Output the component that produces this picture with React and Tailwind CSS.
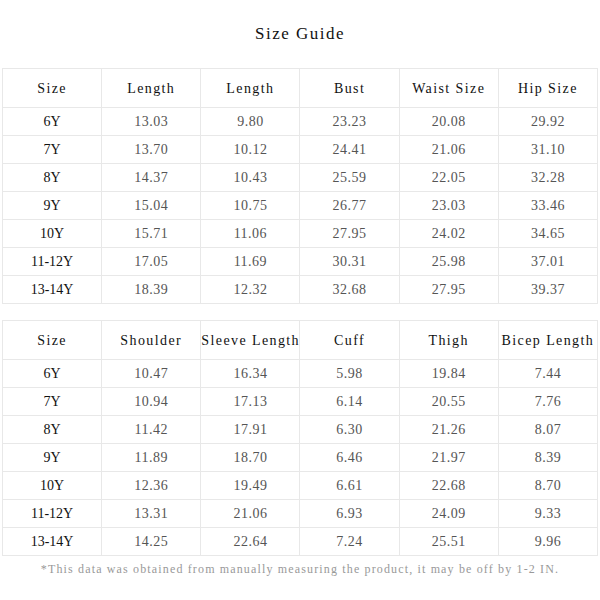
const top = {
  head: ["Size", "Length", "Length", "Bust", "Waist Size", "Hip Size"],
  rows: [
    ["6Y", "13.03", "9.80", "23.23", "20.08", "29.92"],
    ["7Y", "13.70", "10.12", "24.41", "21.06", "31.10"],
    ["8Y", "14.37", "10.43", "25.59", "22.05", "32.28"],
    ["9Y", "15.04", "10.75", "26.77", "23.03", "33.46"],
    ["10Y", "15.71", "11.06", "27.95", "24.02", "34.65"],
    ["11-12Y", "17.05", "11.69", "30.31", "25.98", "37.01"],
    ["13-14Y", "18.39", "12.32", "32.68", "27.95", "39.37"],
  ],
}

const bottom = {
  head: ["Size", "Shoulder", "Sleeve Length", "Cuff", "Thigh", "Bicep Length"],
  rows: [
    ["6Y", "10.47", "16.34", "5.98", "19.84", "7.44"],
    ["7Y", "10.94", "17.13", "6.14", "20.55", "7.76"],
    ["8Y", "11.42", "17.91", "6.30", "21.26", "8.07"],
    ["9Y", "11.89", "18.70", "6.46", "21.97", "8.39"],
    ["10Y", "12.36", "19.49", "6.61", "22.68", "8.70"],
    ["11-12Y", "13.31", "21.06", "6.93", "24.09", "9.33"],
    ["13-14Y", "14.25", "22.64", "7.24", "25.51", "9.96"],
  ],
}

function SizeTable({ data }) {
  return (
    <table className="w-[596px] mx-[2px] table-fixed border-collapse border border-[#e8e8e8]">
      <thead>
        <tr className="h-[39px]">
          {data.head.map((h, i) => (
            <th
              key={i}
              className="border border-[#e8e8e8] text-center font-normal text-[14px] tracking-[1.4px] text-[#111] whitespace-nowrap px-0"
            >
              {h}
            </th>
          ))}
        </tr>
      </thead>
      <tbody>
        {data.rows.map((row, r) => (
          <tr key={r} className="h-[28px]">
            {row.map((cell, c) => (
              <td
                key={c}
                className={
                  c === 0
                    ? "border border-[#e8e8e8] text-center text-[14px] text-[#111]"
                    : "border border-[#e8e8e8] text-center text-[14px] tracking-[0.5px] text-[#555]"
                }
              >
                {cell}
              </td>
            ))}
          </tr>
        ))}
      </tbody>
    </table>
  )
}

export default function App() {
  return (
    <div className="w-[600px] h-[600px] bg-white font-['Liberation_Serif',serif] pt-[24px]">
      <h1 className="text-center text-[17px] tracking-[1.5px] leading-[20px] text-[#111] mb-[24px]">Size Guide</h1>
      <SizeTable data={top} />
      <div className="h-[16px]" />
      <SizeTable data={bottom} />
      <p className="text-center text-[12px] tracking-[1.15px] leading-[14px] text-[#999] mt-[6px]">
        *This data was obtained from manually measuring the product, it may be off by 1-2 IN.
      </p>
    </div>
  )
}
